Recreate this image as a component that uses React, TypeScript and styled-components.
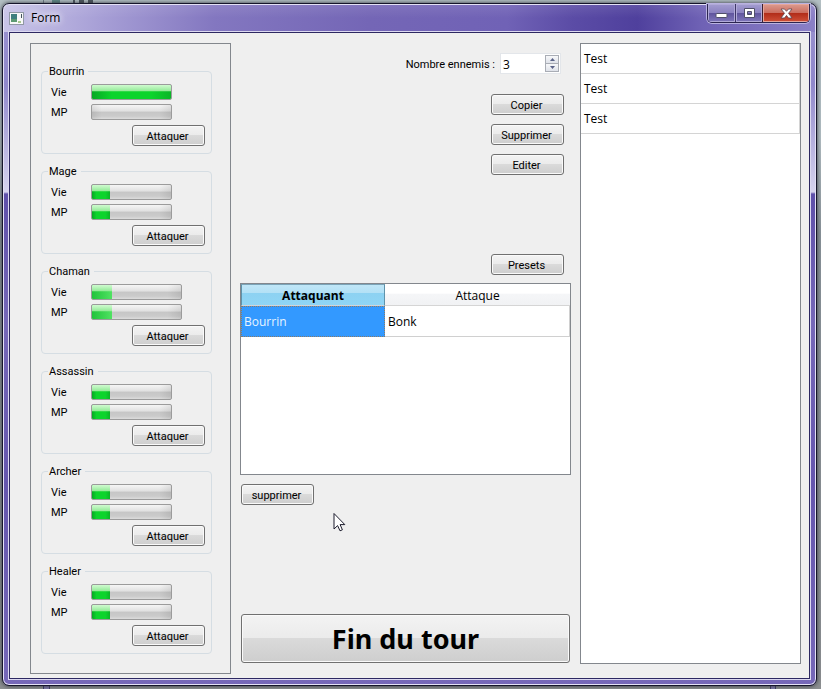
import React, { useState } from "react";
import styled, { createGlobalStyle } from "styled-components";

const ui = `Roboto, "Noto Sans", sans-serif`;
const view = `"Open Sans", "Noto Sans", sans-serif`;

const GlobalStyle = createGlobalStyle`
  *, *::before, *::after { box-sizing: border-box; }
  body { margin: 0; font: 11px/14px ${ui}; color: #000; }
  button, input { font: inherit; color: inherit; }
`;

const Desktop = styled.div`
  min-height: 100vh;
  display: flex;
  padding: 3px 4px 3px 2px;
  background:
    linear-gradient(90deg, transparent 43px, #6f7c86 43px, #6f7c86 44px, transparent 44px, transparent 52px, #5f8a86 52px, #5f8a86 60px, transparent 60px, transparent 73px, #4c555c 73px, #4c555c 75px, transparent 75px, transparent 79px, #4c555c 79px, #4c555c 84px, transparent 84px, transparent 88px, #4c555c 88px, #4c555c 93px, transparent 93px) top / 100% 3px no-repeat,
    linear-gradient(90deg, transparent 43px, #3f3c64 43px, #3f3c64 44px, #7d77a6 44px, #7d77a6 49px, #3f3c64 49px, #3f3c64 50px, transparent 50px, transparent 770px, #3f3c64 770px, #3f3c64 771px, #7d77a6 771px, #7d77a6 775px, #3f3c64 775px, #3f3c64 776px, transparent 776px) bottom / 100% 3px no-repeat,
    linear-gradient(#b3bfc3 0, #b3bfc3 20%, #8a9399 34%, #8c8f91 100%);
`;

const Window = styled.main`
  flex: 1;
  min-width: 0;
  display: flex;
  flex-direction: column;
  border: 1px solid #15152a;
  border-radius: 7px;
  padding: 0 6px 6px;
  background:
    linear-gradient(#ffffff1a, transparent 50%) top / 100% 28px no-repeat,
    linear-gradient(90deg, #c9c5e8 0, #a79fd6 12%, #8377c0 26%, #7466b6 45%, #7062b6 62%, #5b4ca6 70%, #4f409d 78%, #6f62b5 86%, #8b80c6 100%) top / 100% 28px no-repeat,
    linear-gradient(#9a92cf 0, #9088cb 80px, #d6d3ee 188px, #5f50aa 190px, #7668b8 320px, #6556ae 480px, #7668b8 100%);
  box-shadow: inset 0 0 0 1px #e4e1f5, 0 0 4px #2d3038;
`;

const TitleBar = styled.header`
  height: 28px;
  flex: none;
  display: flex;
  align-items: center;
  gap: 7px;
`;

const Title = styled.h1`
  flex: 1;
  margin: 0;
  font: 12px/16px ${view};
  text-shadow: 0 0 6px #fff, 0 0 10px #fff;
`;

const Captions = styled.div`
  align-self: flex-start;
  display: flex;
  height: 19px;
  border: 1px solid #2b2550;
  border-top: 0;
  border-radius: 0 0 5px 5px;
  overflow: hidden;
  box-shadow: 0 0 0 1px #b9b2e0;
`;

const CaptionButton = styled.button<{ $close?: boolean }>`
  width: ${(p) => (p.$close ? 47 : 27)}px;
  height: 18px;
  padding: 0;
  display: grid;
  place-items: center;
  border: 0;
  border-left: ${(p) => (p.$close ? "1px solid #3c2030" : 0)};
  & + &:not(:last-child) { border-left: 1px solid #3d3568; }
  box-shadow: inset 0 0 0 1px ${(p) => (p.$close ? "#e6a79c" : "#b1aad8")};
  background: ${(p) =>
    p.$close
      ? "linear-gradient(#dc9c90 0, #cb6e60 48%, #b02b18 50%, #d0513a 100%)"
      : "linear-gradient(#a49dd0 0, #8b82c0 48%, #5f549d 50%, #8077bb 100%)"};
`;

const Client = styled.div`
  flex: 1;
  display: grid;
  grid-template-columns: 201px minmax(0, 1fr) 221px;
  gap: 9px;
  padding: 10px 8px 4px 20px;
  border: 1px solid #2d2862;
  box-shadow: 0 0 0 1px #dcd9f0;
  background: #efefef;
`;

const Party = styled.section`
  display: flex;
  flex-direction: column;
  gap: 10px;
  padding: 20px 18px 19px 10px;
  border: 1px solid #83878d;
`;

const Member = styled.fieldset`
  height: 90px;
  min-width: 0;
  margin: 0;
  padding: 6px 6px 0 9px;
  border: 1px solid #d5dde3;
  border-radius: 4px;
`;

const MemberName = styled.legend`
  height: 14px;
  margin-left: -3px;
  padding: 0 4px 0 1px;
  line-height: 16px;
`;

const Stat = styled.div`
  display: grid;
  grid-template-columns: 40px 1fr;
  align-items: center;
  height: 16px;
  margin-bottom: 4px;
`;

const StatLabel = styled.span`
  padding-top: 2px;
`;

const Track = styled.div<{ $wide?: boolean }>`
  width: ${(p) => (p.$wide ? 91 : 81)}px;
  height: 16px;
  border: 1px solid #9b9b9b;
  border-radius: 2px;
  overflow: hidden;
  background:
    linear-gradient(90deg, #00000014, transparent 12%, transparent 85%, #00000014),
    linear-gradient(#f6f6f6 0, #e0e0e0 44%, #c6c6c6 50%, #cbcbcb 80%, #dcdcdc 100%);
`;

const Fill = styled.div<{ $light?: boolean }>`
  height: 100%;
  background:
    linear-gradient(#d0fbd0 0, #94eb98 42%, transparent 48%),
    ${(p) =>
      p.$light
        ? "linear-gradient(90deg, #22c43c, #50e262)"
        : "linear-gradient(90deg, #07a824, #0cd42c 25%, #0cd42c 75%, #0bb528)"};
`;

const Button = styled.button<{ $big?: boolean }>`
  width: ${(p) => (p.$big ? "100%" : "73px")};
  height: ${(p) => (p.$big ? 49 : 21)}px;
  padding: ${(p) => (p.$big ? 0 : "2px 2px 0 0")};
  border: 1px solid #707070;
  border-radius: 3px;
  background: linear-gradient(#f3f3f3 0, #ebebeb 48%, #dadada 50%, #cecece 100%);
  box-shadow: inset 0 0 0 1px #fafafa;
  ${(p) => p.$big && `font: bold 27px/34px "Noto Sans", sans-serif;`}
`;

const Right = styled.div`
  display: flex;
  justify-content: flex-end;
`;

const MemberAction = styled(Right)`
  padding-top: 1px;
`;

const Middle = styled.section`
  display: flex;
  flex-direction: column;
  padding-top: 10px;
`;

const CountRow = styled.div`
  display: flex;
  align-items: center;
  justify-content: flex-end;
  gap: 5px;
  padding-right: 10px;
`;

const CountLabel = styled.label`
  padding-top: 2px;
`;

const Spin = styled.div`
  display: flex;
  width: 61px;
  height: 21px;
  padding: 1px;
  border: 1px solid #e3e6ea;
  background: #fff;
`;

const SpinInput = styled.input`
  flex: 1;
  min-width: 0;
  padding: 2px 0 0 1px;
  border: 0;
  outline: 0;
  background: none;
  font: 12px/16px ${view};
`;

const Steps = styled.div`
  display: grid;
  width: 14px;
  border: 1px solid #a9adb5;
`;

const Step = styled.button`
  display: grid;
  place-items: center;
  padding: 0;
  border: 0;
  background: linear-gradient(#f7f8fa, #dfe2e9);
  & + & { border-top: 1px solid #a9adb5; }
`;

const Actions = styled.div`
  display: flex;
  flex-direction: column;
  align-items: flex-end;
  gap: 9px;
  padding: 20px 7px 0 0;
`;

const PresetRow = styled(Right)`
  margin-top: 79px;
  padding-right: 7px;
`;

const TableFrame = styled.div`
  height: 192px;
  margin-top: 8px;
  border: 1px solid #83878d;
  background: #fff;
`;

const Table = styled.table`
  width: 100%;
  table-layout: fixed;
  border-collapse: separate;
  border-spacing: 0;
  font: 12px/16px ${view};
`;

const Head = styled.th<{ $active?: boolean }>`
  height: 22px;
  padding: 2px 0 0;
  width: ${(p) => (p.$active ? "144px" : "auto")};
  font-weight: ${(p) => (p.$active ? "bold" : "normal")};
  border-bottom: 1px solid #d5d5d5;
  ${(p) =>
    p.$active
      ? `border-left: 1px solid #5f93ab; border-right: 1px solid #5f93ab; border-top: 1px solid #7ba4b8;
         background: linear-gradient(#c0e6f7 0, #b3e1f6 38%, #8dd2f2 42%, #8fd5f5 100%);`
      : `background: linear-gradient(#fff 0, #fff 44%, #f5f6f8 48%, #f1f2f4 100%);`}
`;

const Cell = styled.td<{ $active?: boolean }>`
  height: 31px;
  padding: 2px 3px 0;
  border-bottom: 1px solid #d0d0d0;
  border-right: 1px solid #d0d0d0;
  ${(p) => p.$active && `color: #e8f4ff; background: #3399ff; border: 1px dotted #8a7a68; padding: 1px 2px 0;`}
`;

const Below = styled.div`
  padding: 9px 0 0 1px;
`;

const EndRow = styled.div`
  margin-top: auto;
  padding: 0 1px 11px;
`;

const List = styled.ul`
  margin: 0 0 10px;
  padding: 0;
  list-style: none;
  border: 1px solid #83878d;
  background: #fff;
  font: 12px/16px ${view};
`;

const ListItem = styled.li`
  height: 30px;
  padding: 7px 3px;
  border-bottom: 1px solid #d4d4d4;
  border-right: 1px solid #d4d4d4;
`;

const Pointer = styled.svg`
  position: absolute;
  left: 333px;
  top: 512px;
  pointer-events: none;
`;

const party = [
  { name: "Bourrin", vie: 100, mp: 0 },
  { name: "Mage", vie: 23, mp: 23 },
  { name: "Chaman", vie: 23, mp: 23, wide: true },
  { name: "Assassin", vie: 23, mp: 23 },
  { name: "Archer", vie: 23, mp: 23 },
  { name: "Healer", vie: 23, mp: 23 },
];

function Gauge({ label, value, wide }: { label: string; value: number; wide?: boolean }) {
  return (
    <Stat>
      <StatLabel>{label}</StatLabel>
      <Track $wide={wide} role="progressbar" aria-label={label} aria-valuenow={value} aria-valuemin={0} aria-valuemax={100}>
        <Fill $light={wide} style={{ width: `${value}%` }} />
      </Track>
    </Stat>
  );
}

export default function App() {
  const [count, setCount] = useState(3);
  return (
    <Desktop>
      <GlobalStyle />
      <Window>
        <TitleBar>
          <svg width="15" height="13" viewBox="0 0 15 13" aria-hidden="true">
            <rect x=".5" y=".5" width="14" height="12" fill="#f7f8f8" stroke="#9098a4" />
            <rect x="2" y="2" width="6" height="8" fill="#3f7f7e" />
            <path d="M2 7h6v3H2z" fill="#5c9a72" />
            <path d="M12.500 2v4" stroke="#46545e" />
            <path d="M9 9h3v2H9z" fill="#a7c78e" />
          </svg>
          <Title>Form</Title>
          <Captions>
            <CaptionButton aria-label="Minimize">
              <svg width="13" height="13"><rect x="1" y="6.500" width="11" height="4" rx="1" fill="#fff" stroke="#50506a" /></svg>
            </CaptionButton>
            <CaptionButton aria-label="Maximize">
              <svg width="13" height="11">
                <path d="M1.500.5h10v9h-10zM4.500 3.500v3h4v-3z" fillRule="evenodd" fill="#fff" stroke="#50506a" />
              </svg>
            </CaptionButton>
            <CaptionButton $close aria-label="Close">
              <svg width="13" height="11" viewBox="0 0 13 11">
                <path d="M1 1h3.500l2 2.300L8.500 1H12L8.500 5.300 12 10H8.500l-2-2.600-2 2.600H1l3.500-4.700z" fill="#fff" stroke="#5a4450" strokeWidth=".8" />
              </svg>
            </CaptionButton>
          </Captions>
        </TitleBar>
        <Client>
          <Party>
            {party.map((m) => (
              <Member key={m.name}>
                <MemberName>{m.name}</MemberName>
                <Gauge label="Vie" value={m.vie} wide={m.wide} />
                <Gauge label="MP" value={m.mp} wide={m.wide} />
                <MemberAction><Button>Attaquer</Button></MemberAction>
              </Member>
            ))}
          </Party>
          <Middle>
            <CountRow>
              <CountLabel htmlFor="count">Nombre ennemis :</CountLabel>
              <Spin>
                <SpinInput id="count" value={count} onChange={(e) => setCount(Number(e.target.value) || 0)} />
                <Steps>
                  <Step aria-label="Plus" onClick={() => setCount(count + 1)}>
                    <svg width="5" height="3"><path d="M0 3 2.500 0 5 3z" fill="#5a6388" /></svg>
                  </Step>
                  <Step aria-label="Moins" onClick={() => setCount(Math.max(0, count - 1))}>
                    <svg width="5" height="3"><path d="M0 0h5L2.500 3z" fill="#5a6388" /></svg>
                  </Step>
                </Steps>
              </Spin>
            </CountRow>
            <Actions>
              <Button>Copier</Button>
              <Button>Supprimer</Button>
              <Button>Editer</Button>
            </Actions>
            <PresetRow><Button>Presets</Button></PresetRow>
            <TableFrame>
              <Table>
                <thead>
                  <tr><Head $active>Attaquant</Head><Head>Attaque</Head></tr>
                </thead>
                <tbody>
                  <tr><Cell $active>Bourrin</Cell><Cell>Bonk</Cell></tr>
                </tbody>
              </Table>
            </TableFrame>
            <Below><Button>supprimer</Button></Below>
            <EndRow><Button $big>Fin du tour</Button></EndRow>
          </Middle>
          <List>
            <ListItem>Test</ListItem>
            <ListItem>Test</ListItem>
            <ListItem>Test</ListItem>
          </List>
        </Client>
      </Window>
      <Pointer width="13" height="20" viewBox="0 0 13 20" aria-hidden="true">
        <path d="M1 1.500v15.500l3.600-3.400 2.400 5.200 2.400-1-2.300-5.200h4.700z" fill="#fff" stroke="#1b1b2c" />
      </Pointer>
    </Desktop>
  );
}
